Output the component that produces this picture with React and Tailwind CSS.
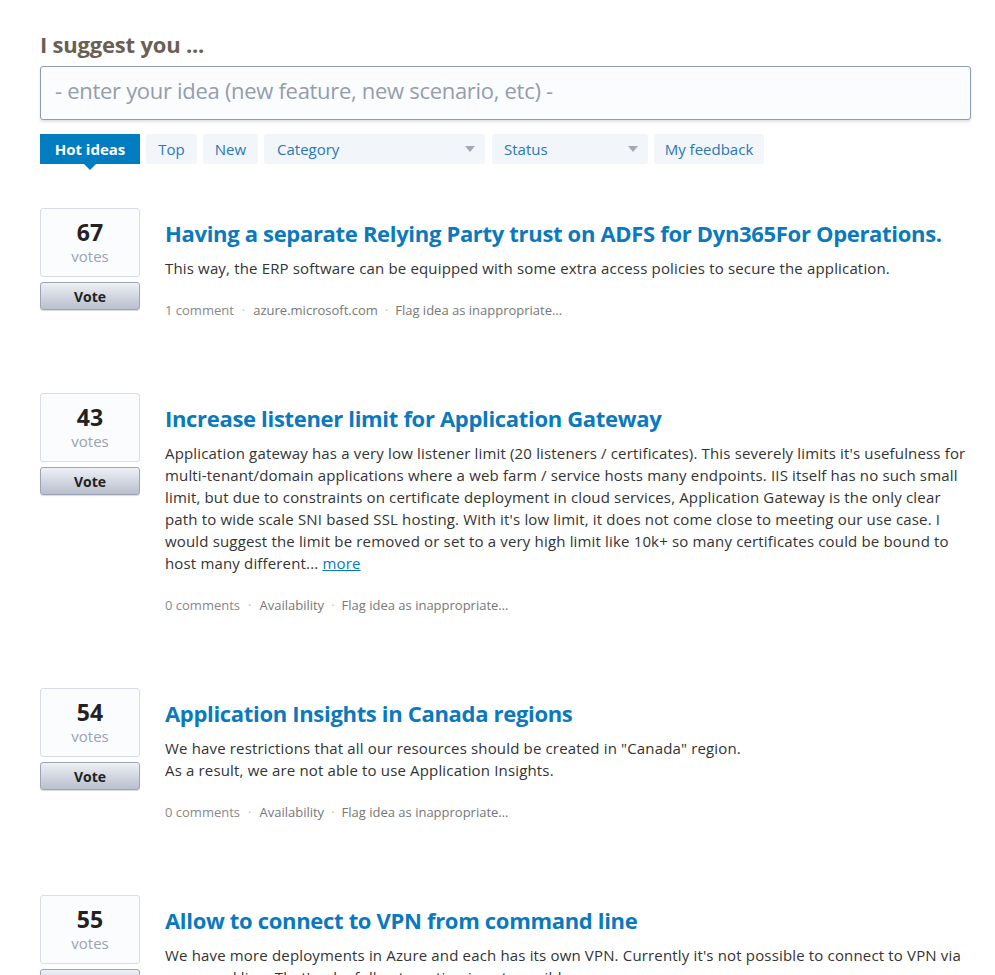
import React from "react";

const ideas = [
  {
    votes: 67,
    title: "Having a separate Relying Party trust on ADFS for Dyn365For Operations.",
    body: ["This way, the ERP software can be equipped with some extra access policies to secure the application."],
    comments: "1 comment",
    category: "azure.microsoft.com",
  },
  {
    votes: 43,
    title: "Increase listener limit for Application Gateway",
    body: [
      "Application gateway has a very low listener limit (20 listeners / certificates). This severely limits it's usefulness for multi-tenant/domain applications where a web farm / service hosts many endpoints. IIS itself has no such small limit, but due to constraints on certificate deployment in cloud services, Application Gateway is the only clear path to wide scale SNI based SSL hosting. With it's low limit, it does not come close to meeting our use case. I would suggest the limit be removed or set to a very high limit like 10k+ so many certificates could be bound to host many different...",
    ],
    more: true,
    comments: "0 comments",
    category: "Availability",
  },
  {
    votes: 54,
    title: "Application Insights in Canada regions",
    body: [
      'We have restrictions that all our resources should be created in "Canada" region.',
      "As a result, we are not able to use Application Insights.",
    ],
    comments: "0 comments",
    category: "Availability",
  },
  {
    votes: 55,
    title: "Allow to connect to VPN from command line",
    body: [
      "We have more deployments in Azure and each has its own VPN. Currently it's not possible to connect to VPN via command line. That's why full automation is not possible.",
    ],
    comments: "0 comments",
    category: "Availability",
  },
];

const Caret = () => (
  <svg width="10" height="6" viewBox="0 0 10 6" className="shrink-0">
    <path d="M0 0h10L5 6z" fill="#a3a9b5" />
  </svg>
);

const Idea = ({ idea }) => (
  <div className="flex gap-[25px] mb-[73px]">
    <div className="w-[100px] shrink-0">
      <div className="h-[69px] border border-[#d8dde6] rounded-[3px] bg-[#fbfcfe] flex flex-col items-center">
        <div className="mt-[9px] text-[23px] leading-[28px] font-bold text-[#222]">{idea.votes}</div>
        <div className="text-[15px] leading-[20px] text-[#9aa2ae]">votes</div>
      </div>
      <button className="mt-[5px] w-full h-[28px] rounded-[3px] border border-[#9da4b4] bg-gradient-to-b from-[#eef0f5] to-[#b9bfcd] text-[14px] font-bold text-[#222] shadow-[0_1px_1px_rgba(0,0,0,0.15)]">
        Vote
      </button>
    </div>
    <div className="flex-1 min-w-0">
      <h2 className="mt-[10px] mb-[9px] text-[22px] leading-[30px] font-bold tracking-[-0.32px] text-[#0a79be]">{idea.title}</h2>
      <div className="text-[15px] leading-[22px] tracking-[0.16px] text-[#333]">
        {idea.body.map((p, i) => (
          <p key={i}>
            {p}
            {idea.more && (
              <>
                {" "}
                <a href="#" className="text-[#0a79be] underline">more</a>
              </>
            )}
          </p>
        ))}
      </div>
      <div className="mt-[21px] text-[13px] leading-[20px] text-[#777] flex items-center">
        <span className="text-[#888]">{idea.comments}</span>
        <span className="mx-[8px] text-[#c4c4c4]">·</span>
        <span>{idea.category}</span>
        <span className="mx-[7px] text-[#c4c4c4]">·</span>
        <span>Flag idea as inappropriate…</span>
      </div>
    </div>
  </div>
);

export default function App() {
  return (
    <div className="bg-white pl-[40px] pr-[24px] pt-[30px] font-['Open_Sans',sans-serif] w-[995px] h-[975px] overflow-hidden">
      <h1 className="text-[22px] leading-[28px] font-bold tracking-[-0.2px] text-[#6b5e55] mb-[8px]">I suggest you ...</h1>
      <div className="h-[54px] border border-[#8f9ab4] rounded-[3px] bg-[#fafcfe] shadow-[0_2px_3px_rgba(0,0,0,0.12)] flex items-center px-[14px] pb-[5px]">
        <span className="text-[22px] tracking-[-0.3px] text-[#959cad]">- enter your idea (new feature, new scenario, etc) -</span>
      </div>
      <div className="mt-[14px] flex gap-[6px] h-[30px] text-[15px]">
        <div className="relative w-[100px] bg-[#007dc1] text-white font-bold flex items-center justify-center">
          Hot ideas
          <div className="absolute left-1/2 -translate-x-1/2 top-full w-0 h-0 border-l-[6px] border-r-[6px] border-t-[6px] border-l-transparent border-r-transparent border-t-[#007dc1]" />
        </div>
        <div className="w-[51px] bg-[#f2f5fa] rounded-[3px] text-[#2a78b6] flex items-center justify-center">Top</div>
        <div className="w-[55px] bg-[#f2f5fa] rounded-[3px] text-[#2a78b6] flex items-center justify-center">New</div>
        <div className="w-[221px] bg-[#f2f5fa] rounded-[3px] text-[#2a78b6] flex items-center justify-between pl-[13px] pr-[10px]">
          Category <Caret />
        </div>
        <div className="ml-[1px] w-[156px] bg-[#f2f5fa] rounded-[3px] text-[#2a78b6] flex items-center justify-between pl-[12px] pr-[10px]">
          Status <Caret />
        </div>
        <div className="w-[110px] bg-[#f2f5fa] rounded-[3px] text-[#2a78b6] flex items-center justify-center">My feedback</div>
      </div>
      <div className="mt-[44px]">
        {ideas.map((idea) => (
          <Idea key={idea.votes} idea={idea} />
        ))}
      </div>
    </div>
  );
}
